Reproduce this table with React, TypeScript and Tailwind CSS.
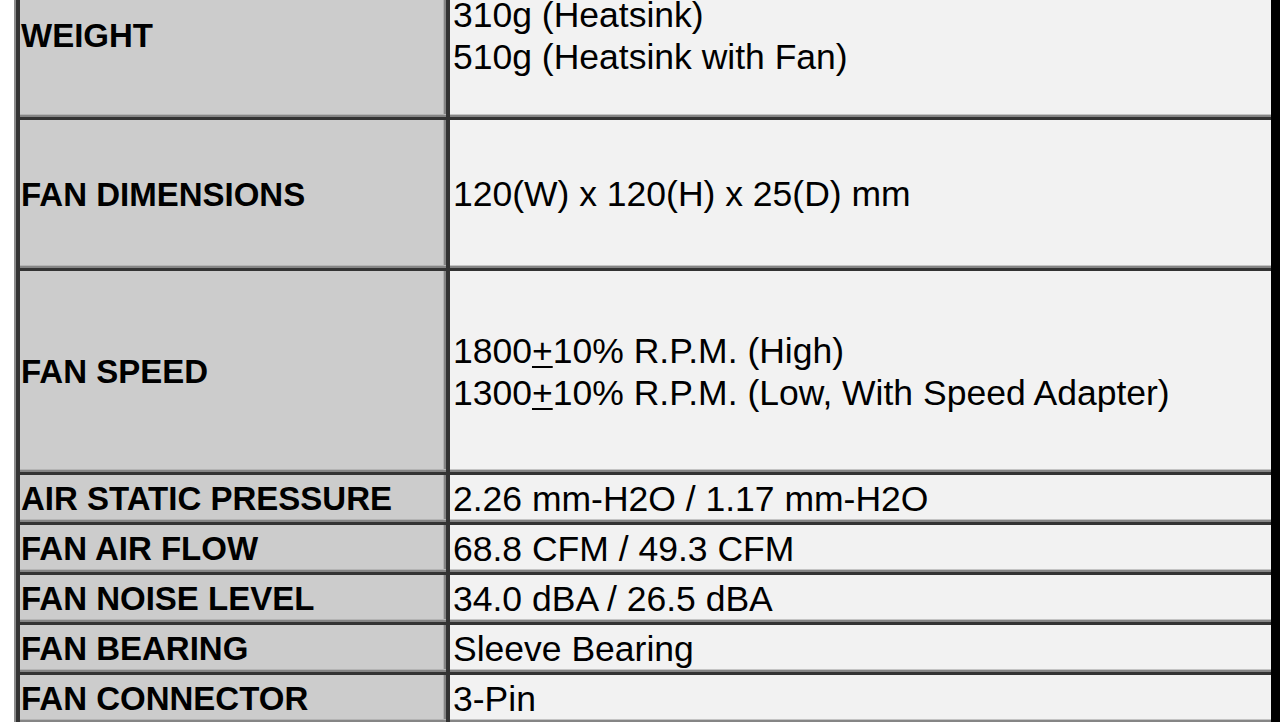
import React from 'react';

type Row = {
    label: string;
    lines: React.ReactNode[];
    h: string;
};

const PM = () => <span className="underline decoration-2 underline-offset-[3px]">+</span>;

const ROWS: Row[] = [
    { label: 'WEIGHT', lines: ['310g (Heatsink)', '510g (Heatsink with Fan)'], h: 'h-[163px]' },
    { label: 'FAN DIMENSIONS', lines: ['120(W) x 120(H) x 25(D) mm'], h: 'h-[148px]' },
    {
        label: 'FAN SPEED',
        lines: [
            <>1800<PM />10% R.P.M. (High)</>,
            <>1300<PM />10% R.P.M. (Low, With Speed Adapter)</>,
        ],
        h: 'h-[201px]',
    },
    { label: 'AIR STATIC PRESSURE', lines: ['2.26 mm-H2O / 1.17 mm-H2O'], h: 'h-[47px]' },
    { label: 'FAN AIR FLOW', lines: ['68.8 CFM / 49.3 CFM'], h: 'h-[47px]' },
    { label: 'FAN NOISE LEVEL', lines: ['34.0 dBA / 26.5 dBA'], h: 'h-[47px]' },
    { label: 'FAN BEARING', lines: ['Sleeve Bearing'], h: 'h-[47px]' },
    { label: 'FAN CONNECTOR', lines: ['3-Pin'], h: 'h-[47px]' },
];

export default function App() {
    return (
        <div className="h-[722px] overflow-hidden bg-white font-['Liberation_Sans',Arial,sans-serif] text-black">
            <div className="-mt-[46px] ml-[14px] border-l-2 border-l-[#8c8c8c] border-r-[9px] border-r-black bg-[#333333] pl-[4px]">
                <div className="grid grid-cols-[426px_821px] gap-x-[4px] gap-y-[3px]">
                    {ROWS.map((row) => (
                        <React.Fragment key={row.label}>
                            <div
                                className={`${row.h} flex items-center bg-[#cccccc] pl-[1px] text-[33px] font-bold leading-none shadow-[inset_0_-2px_0_#858585,inset_0_-3px_0_#b4b4b4,inset_-2px_0_0_#858585,inset_-3px_0_0_#b4b4b4]`}
                            >
                                {row.label}
                            </div>
                            <div
                                className={`${row.h} flex flex-col justify-center bg-[#f2f2f2] pl-[3px] text-[35.5px] leading-[42px] shadow-[inset_0_-2px_0_#858585,inset_0_-3px_0_#c4c4c4]`}
                            >
                                {row.lines.map((line, i) => (
                                    <div key={i} className="whitespace-nowrap">
                                        {line}
                                    </div>
                                ))}
                            </div>
                        </React.Fragment>
                    ))}
                </div>
            </div>
        </div>
    );
}
